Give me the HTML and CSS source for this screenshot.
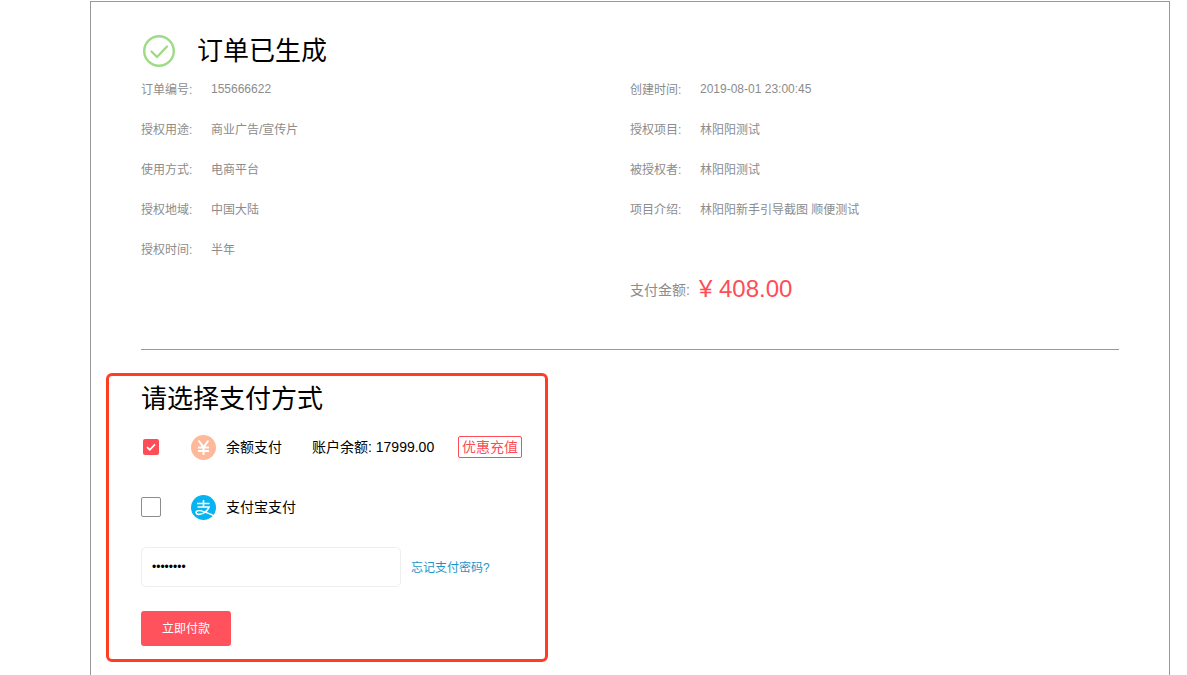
FILE: index.html
```html
<!DOCTYPE html>
<html lang="zh-CN">
<head>
<meta charset="utf-8">
<title>订单已生成</title>
<link rel="stylesheet" href="styles.css">
</head>
<body>
<main class="card">
  <header class="head">
    <svg class="head-icon" width="32" height="32" viewBox="0 0 32 32" fill="none" stroke="#9edb88" stroke-width="2.400">
      <circle cx="16" cy="16" r="14.800"/>
      <path d="M8.500 16.500l5.500 5.500 10-10.500" stroke-linecap="round" stroke-linejoin="round"/>
    </svg>
    <h1 class="title">订单已生成</h1>
  </header>
  <section class="info">
    <div class="row"><span class="label cjk">订单编号:</span><span>155666622</span></div>
    <div class="row"><span class="label cjk">创建时间:</span><span>2019-08-01 23:00:45</span></div>
    <div class="row"><span class="label cjk">授权用途:</span><span class="cjk">商业广告/宣传片</span></div>
    <div class="row"><span class="label cjk">授权项目:</span><span class="cjk">林阳阳测试</span></div>
    <div class="row"><span class="label cjk">使用方式:</span><span class="cjk">电商平台</span></div>
    <div class="row"><span class="label cjk">被授权者:</span><span class="cjk">林阳阳测试</span></div>
    <div class="row"><span class="label cjk">授权地域:</span><span class="cjk">中国大陆</span></div>
    <div class="row"><span class="label cjk">项目介绍:</span><span class="cjk">林阳阳新手引导截图 顺便测试</span></div>
    <div class="row"><span class="label cjk">授权时间:</span><span class="cjk">半年</span></div>
    <div class="row"></div>
    <div class="row"></div>
    <div class="row total"><span class="total-label">支付金额:</span><span class="amount">¥ 408.00</span></div>
  </section>
  <hr class="divider">
  <section class="pay">
    <h2 class="pay-title">请选择支付方式</h2>
    <div class="method">
      <span class="check-cell"><span class="check on">
        <svg width="14" height="14" viewBox="0 0 14 14" fill="none" stroke="#fff" stroke-width="1.800"><path d="M3 7.200l2.800 2.600L11 4.400"/></svg>
      </span></span>
      <svg class="logo" width="25" height="25" viewBox="0 0 25 25">
        <circle cx="12.500" cy="12.500" r="12.500" fill="#ffb899"/>
        <path d="M7.500 5.500l5 6.500 5-6.500M7 12.500h11M7 16h11M12.500 12v8" fill="none" stroke="#fff" stroke-width="2"/>
      </svg>
      <span class="method-name cjk">余额支付</span>
      <span class="balance">账户余额: 17999.00</span>
      <a class="recharge" href="#">优惠充值</a>
    </div>
    <div class="method">
      <span class="check-cell"><span class="check"></span></span>
      <svg class="logo" width="25" height="25" viewBox="0 0 25 25">
        <circle cx="12.500" cy="12.500" r="12.500" fill="#06b4f2"/>
        <path d="M6 8.500h12.500M12.500 5v7M6.500 12h11.500c-1.500 3.800-5.500 6.800-9.500 7.300-2.800.3-4-1.300-3-2.800 1.300-2 6-1.300 19 5" fill="none" stroke="#fff" stroke-width="1.600"/>
      </svg>
      <span class="method-name cjk">支付宝支付</span>
    </div>
    <div class="pwd-row">
      <input class="pwd" type="password" value="12345678" aria-label="支付密码">
      <a class="forgot cjk" href="#">忘记支付密码?</a>
    </div>
    <button class="submit" type="button"><span class="cjk">立即付款</span></button>
  </section>
</main>
</body>
</html>
```
FILE: styles.css
```css
* { box-sizing: border-box; }
html, body { margin: 0; height: 675px; overflow: hidden; background: #fff; }
body {
  padding: 1px 17px 0 90px;
  font-family: "Liberation Sans", "Noto Sans CJK SC", sans-serif;
}
.card {
  height: 700px;
  border: 1px solid #999;
  padding: 0 50px;
}
.cjk { padding-bottom: 2px; }
.head {
  display: flex;
  align-items: center;
  height: 32px;
  margin-top: 33px;
  padding-left: 2px;
}
.head-icon { flex: none; }
.title {
  margin: 0 0 0 22px;
  padding-bottom: 6px;
  font-size: 26px;
  font-weight: 400;
  color: #000;
}
.info {
  display: grid;
  grid-template-columns: 489px 1fr;
  grid-auto-rows: 40px;
  margin-top: 2px;
  font-size: 12px;
  color: #8c8c8c;
}
.row { display: flex; align-items: center; height: 40px; }
.label { width: 70px; flex: none; }
.total { padding-bottom: 1px; }
.total-label { font-size: 14px; width: 69px; flex: none; }
.amount { font-size: 24px; color: #ff4d57; }
.divider {
  height: 1px;
  margin: 40px 0 0;
  border: 0;
  background: #999;
}
.pay {
  width: 442px;
  height: 289px;
  margin: 23px 0 0 -35px;
  padding: 0 0 0 32px;
  border: 3px solid #ff3d22;
  border-radius: 6px;
}
.pay-title {
  margin: 5px 0 0;
  font-size: 26px;
  line-height: 36px;
  font-weight: 400;
  color: #000;
}
.method {
  display: flex;
  align-items: center;
  height: 30px;
  margin-top: 15px;
  font-size: 14px;
  color: #000;
}
.method + .method { margin-top: 30px; }
.check-cell { display: flex; align-items: center; justify-content: center; width: 20px; flex: none; }
.check {
  display: block;
  width: 20px;
  height: 20px;
  border: 1px solid #8c8c8c;
  border-radius: 2px;
}
.check.on {
  display: flex;
  align-items: center;
  justify-content: center;
  width: 16px;
  height: 16px;
  border: 0;
  background: #ff4d57;
}
.logo { flex: none; margin-left: 30px; }
.method-name { margin-left: 10px; width: 86px; flex: none; }
.balance { width: 146px; flex: none; padding-bottom: 2px; }
.recharge {
  padding: 1px 3px;
  border: 1px solid #ff4d57;
  border-radius: 2px;
  color: #ff4d57;
  text-decoration: none;
  line-height: 18px;
}
.pwd-row { display: flex; align-items: center; margin-top: 25px; }
.pwd {
  width: 260px;
  height: 40px;
  padding: 0 10px;
  border: 1px solid #eee;
  border-radius: 5px;
  font: 12px "Liberation Sans", sans-serif;
  color: #000;
  outline: 0;
}
.forgot { margin-left: 10px; font-size: 12px; color: #1b95c9; text-decoration: none; }
.submit {
  display: block;
  width: 90px;
  height: 35px;
  margin-top: 24px;
  padding: 0;
  border: 0;
  border-radius: 3px;
  background: #ff525c;
  color: #fff;
  font: 12px "Liberation Sans", "Noto Sans CJK SC", sans-serif;
}
.submit .cjk { display: block; }
```
